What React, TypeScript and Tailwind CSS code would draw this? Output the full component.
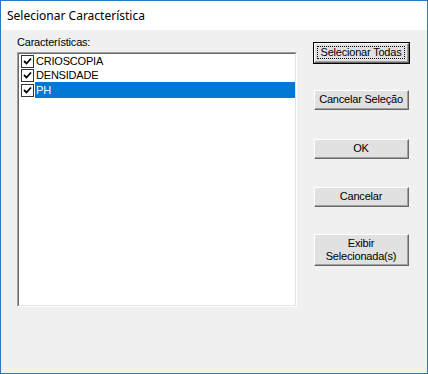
import React from "react";

function Check() {
  return (
    <span className="flex h-[13px] w-[13px] shrink-0 items-center justify-center border border-[#333] bg-white">
      <svg width="9" height="9" viewBox="0 0 9 9">
        <path d="M1 4 L3.5 6.5 L8 1.5" stroke="#000" strokeWidth="1.8" fill="none" />
      </svg>
    </span>
  );
}

function Btn({ children, def, h = 22 }: { children: React.ReactNode; def?: boolean; h?: number }) {
  return (
    <div
      className={
        "w-[97px] " +
        (def ? "border border-[#000] " : "border border-transparent ")
      }
      style={{ height: h }}
    >
      <div className="h-full w-full border-t border-l border-t-white border-l-white border-r border-b border-r-[#696969] border-b-[#696969]">
        <div className="h-full w-full border-r border-b border-r-[#a0a0a0] border-b-[#a0a0a0] bg-[#e1e1e1] p-[2px]">
          <div
            className={
              "flex h-full w-full items-center justify-center whitespace-nowrap text-center leading-[13px] " +
              (def ? "border border-dotted border-black" : "border border-transparent")
            }
          >
            {children}
          </div>
        </div>
      </div>
    </div>
  );
}

export default function App() {
  const items = ["CRIOSCOPIA", "DENSIDADE", "PH"];
  return (
    <div
      className="flex h-[374px] w-[428px] flex-col border border-[#2b78c0] bg-[#f0f0f0] text-[11px] text-black"
      style={{ fontFamily: '"Liberation Sans", Arial, sans-serif' }}
    >
      <div className="flex h-[29px] items-center bg-white pl-[6px] text-[12px]" style={{ fontFamily: '"Noto Sans", "Liberation Sans", sans-serif' }}>
        Selecionar Característica
      </div>
      <div className="flex flex-1 pl-[16px]">
        <div className="flex flex-col">
          <div className="mt-[5px] h-[14px] leading-[14px] tracking-[-0.2px]">Características:</div>
          <div className="mt-[3px] h-[255px] w-[280px] border-t border-l border-t-[#a0a0a0] border-l-[#a0a0a0] border-r border-b border-r-white border-b-white">
            <div className="h-full w-full border-t border-l border-t-[#696969] border-l-[#696969] border-r border-b border-r-[#e3e3e3] border-b-[#e3e3e3] bg-white">
              {items.map((it, i) => (
                <div key={it} className="flex h-[14px] items-center pl-[2px]" style={i === 2 ? { height: 16 } : undefined}>
                  <Check />
                  <div
                    className={
                      "ml-[1px] flex h-full flex-1 items-center pl-[1px] text-[11px] tracking-[-0.2px] " +
                      (i === 2 ? "bg-[#0078d7] text-white" : "")
                    }
                  >
                    {it}
                  </div>
                </div>
              ))}
            </div>
          </div>
        </div>
        <div className="ml-[16px] mt-[12px] flex flex-col text-[11px] tracking-[-0.2px]">
          <Btn def>Selecionar Todas</Btn>
          <div className="h-[25px]" />
          <Btn>Cancelar Seleção</Btn>
          <div className="h-[27px]" />
          <Btn>OK</Btn>
          <div className="h-[26px]" />
          <Btn>Cancelar</Btn>
          <div className="h-[25px]" />
          <Btn h={34}>
            <span>
              Exibir
              <br />
              Selecionada(s)
            </span>
          </Btn>
        </div>
      </div>
    </div>
  );
}
